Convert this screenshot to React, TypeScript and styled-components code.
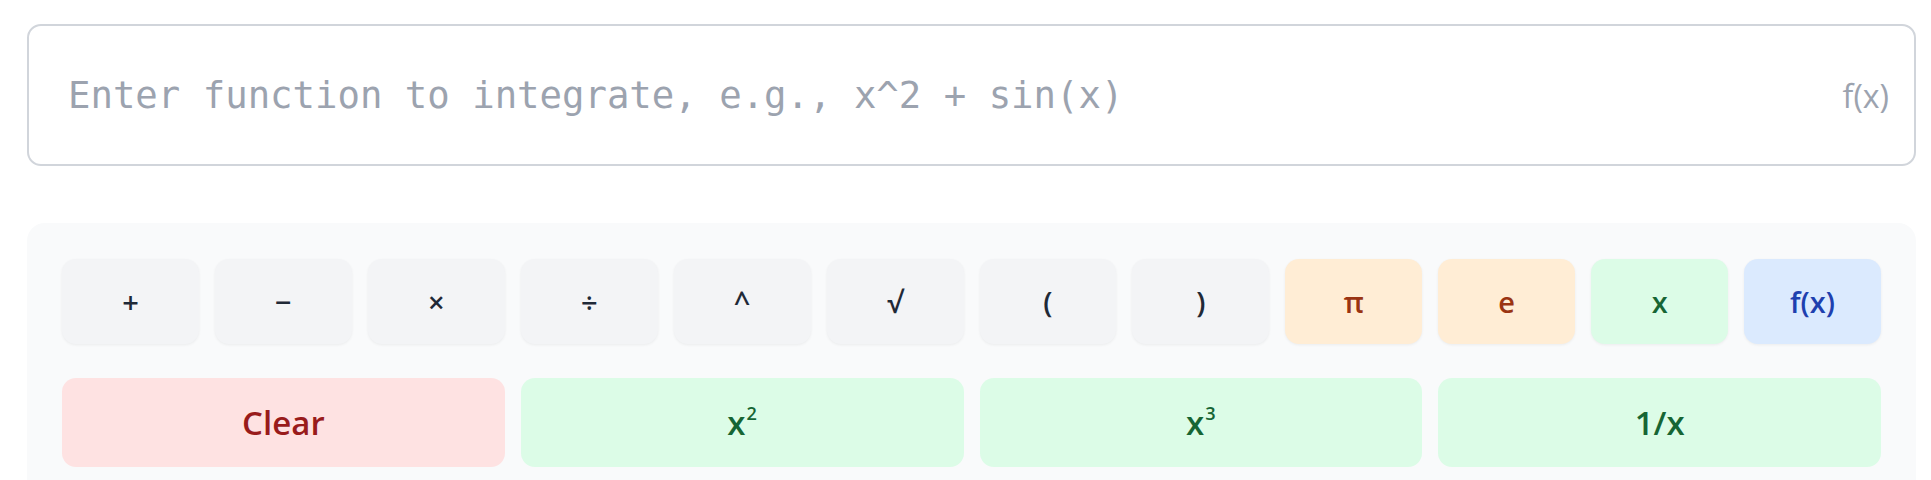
import styled, { createGlobalStyle } from 'styled-components';

const GlobalStyle = createGlobalStyle`
  html, body {
    margin: 0;
    padding: 0;
    background: #ffffff;
  }
  body {
    font-family: "Open Sans", "Noto Sans", sans-serif;
  }
`;

type Tone = 'gray' | 'orange' | 'green' | 'blue' | 'red';

const tones: Record<Tone, { bg: string; fg: string }> = {
  gray: { bg: '#f3f4f6', fg: '#1f2937' },
  orange: { bg: '#ffedd5', fg: '#9a3412' },
  green: { bg: '#dcfce7', fg: '#166534' },
  blue: { bg: '#dbeafe', fg: '#1e40af' },
  red: { bg: '#fee2e2', fg: '#991b1b' },
};

const keys: { label: string; tone: Tone }[] = [
  { label: '+', tone: 'gray' },
  { label: '−', tone: 'gray' },
  { label: '×', tone: 'gray' },
  { label: '÷', tone: 'gray' },
  { label: '^', tone: 'gray' },
  { label: '√', tone: 'gray' },
  { label: '(', tone: 'gray' },
  { label: ')', tone: 'gray' },
  { label: 'π', tone: 'orange' },
  { label: 'e', tone: 'orange' },
  { label: 'x', tone: 'green' },
  { label: 'f(x)', tone: 'blue' },
];

export default function App() {
  return (
    <>
      <GlobalStyle />
      <Page>
        <InputWrap>
          <FunctionInput placeholder='Enter function to integrate, e.g., x^2 + sin(x)' />
          <InputHint>f(x)</InputHint>
        </InputWrap>
        <Keypad>
          {keys.map((k) => (
            <Key key={k.label} $tone={k.tone}>{k.label}</Key>
          ))}
          <WideKey $tone='red'>Clear</WideKey>
          <WideKey $tone='green'>x<Sup>2</Sup></WideKey>
          <WideKey $tone='green'>x<Sup>3</Sup></WideKey>
          <WideKey $tone='green'>1/x</WideKey>
        </Keypad>
      </Page>
    </>
  );
}

const Page = styled.div`
  width: 1889px;
  padding: 24px 0 0 27px;
  display: flex;
  flex-direction: column;
  gap: 57px;
`;

const InputWrap = styled.div`
  position: relative;
`;

const FunctionInput = styled.input`
  box-sizing: border-box;
  width: 100%;
  height: 142px;
  border: 2px solid #d1d5db;
  border-radius: 14px;
  padding: 0 120px 0 39px;
  font-family: "DejaVu Sans Mono", monospace;
  font-size: 37.3px;
  color: #111827;
  background: #ffffff;
  outline: none;

  &::placeholder {
    color: #9ca3af;
  }
`;

const InputHint = styled.span`
  position: absolute;
  right: 27px;
  top: 50%;
  transform: translateY(-50%);
  font-family: "Open Sans", sans-serif;
  font-size: 32px;
  color: #9ca3af;
`;

const Keypad = styled.div`
  background: #f9fafb;
  border-radius: 18px;
  padding: 36px 35px 40px;
  display: grid;
  grid-template-columns: repeat(12, 1fr);
  column-gap: 16px;
  row-gap: 34px;
`;

const Key = styled.button<{ $tone: Tone }>`
  height: 85px;
  border: none;
  border-radius: 14px;
  background: ${(p) => tones[p.$tone].bg};
  color: ${(p) => tones[p.$tone].fg};
  font-family: "Open Sans", sans-serif;
  font-size: 29px;
  font-weight: 600;
  box-shadow: 0 1px 3px rgba(0, 0, 0, 0.06);
  display: flex;
  align-items: center;
  justify-content: center;
  padding: 0;
`;

const WideKey = styled(Key)`
  grid-column: span 3;
  height: 89px;
  font-size: 33px;
  font-weight: 600;
  box-shadow: none;
`;

const Sup = styled.sup`
  font-size: 0.55em;
  line-height: 0;
  position: relative;
  top: -0.5em;
  margin-left: 1px;
`;
